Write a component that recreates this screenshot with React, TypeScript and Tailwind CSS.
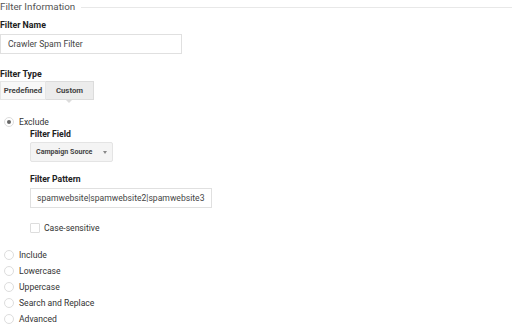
export default function App() {
  const radios = ['Include', 'Lowercase', 'Uppercase', 'Search and Replace', 'Advanced'];
  return (
    <div className="h-[334px] w-[512px] overflow-hidden bg-white text-[#333]" style={{ fontFamily: 'Roboto, "Liberation Sans", sans-serif' }}>
      <div className="flex items-center gap-[6px]">
        <span className="text-[9.8px] leading-[14px] text-[#555]">Filter Information</span>
        <div className="h-px flex-1 bg-[#e8e8e8]" />
      </div>

      <div className="mt-[4px] text-[8.8px] font-bold leading-[14px] text-[#222]">Filter Name</div>
      <div className="mt-[2px] flex h-[20px] w-[182px] items-center border border-[#e0e0e0] px-[7px] text-[8.6px] text-[#444]">
        Crawler Spam Filter
      </div>

      <div className="mt-[13px] text-[8.8px] font-bold leading-[14px] text-[#222]">Filter Type</div>
      <div className="relative flex h-[19px] w-[94px] text-[7.8px] font-bold text-[#444]">
        <div className="flex w-[46px] items-center justify-center border border-[#e6e6e6] bg-[#f8f8f8]">Predefined</div>
        <div className="relative flex w-[48px] items-center justify-center border border-l-0 border-[#dcdcdc] bg-[#ececec]">
          Custom
          <div className="absolute left-[19px] top-full h-0 w-0 border-x-[4px] border-t-[4px] border-x-transparent border-t-[#dcdcdc]" />
        </div>
      </div>

      <div className="mt-[16px] flex items-center gap-[5px] pl-[4px] text-[8.6px] leading-[12px]">
        <span className="flex h-[10px] w-[10px] items-center justify-center rounded-full border border-[#ddd]">
          <span className="h-[4px] w-[4px] rounded-full bg-[#666]" />
        </span>
        Exclude
      </div>

      <div className="pl-[30px]">
        <div className="text-[8.6px] font-bold leading-[12px] text-[#222]">Filter Field</div>
        <div className="mt-[2px] flex h-[20px] w-[83px] items-center justify-between rounded-[2px] border border-[#e4e4e4] bg-[#f4f4f4] pl-[5px] pr-[5px] text-[7.1px] font-bold text-[#444]">
          <span>Campaign Source</span>
          <span className="h-0 w-0 border-x-[2.5px] border-t-[3px] border-x-transparent border-t-[#888]" />
        </div>

        <div className="mt-[11px] text-[8.6px] font-bold leading-[12px] text-[#222]">Filter Pattern</div>
        <div className="mt-[3px] flex h-[20px] w-[182px] items-center border border-[#e0e0e0] px-[6px] text-[8.6px] text-[#444]">
          spamwebsite|spamwebsite2|spamwebsite3
        </div>

        <div className="mt-[14px] flex items-center gap-[4px] text-[8.6px] leading-[12px]">
          <span className="h-[10px] w-[10px] rounded-[1px] border border-[#ddd]" />
          Case-sensitive
        </div>
      </div>

      <div className="mt-[13px] flex flex-col">
        {radios.map((r) => (
          <div key={r} className="flex h-[16px] items-center gap-[5px] pl-[4px] text-[8.6px]">
            <span className="h-[10px] w-[10px] rounded-full border border-[#ddd]" />
            {r}
          </div>
        ))}
      </div>
    </div>
  );
}
